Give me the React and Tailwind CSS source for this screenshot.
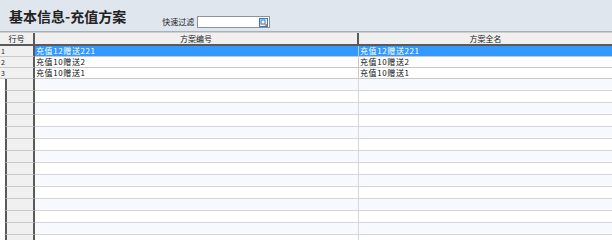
const rows = [
  { no: '1', code: '充值12赠送221', name: '充值12赠送221' },
  { no: '2', code: '充值10赠送2', name: '充值10赠送2' },
  { no: '3', code: '充值10赠送1', name: '充值10赠送1' },
];

const EMPTY_ROWS = 14;

function SearchIcon() {
  return (
    <svg width="9" height="9" viewBox="0 0 9 9">
      <rect x="0.5" y="0.5" width="8" height="8" fill="#e8f1fb" stroke="#3a78c2" />
      <rect x="2" y="2" width="4" height="4" fill="#ffffff" stroke="#3a78c2" />
      <rect x="6" y="6" width="2" height="2" fill="#e08a1e" />
    </svg>
  );
}

export default function App() {
  const font = { fontFamily: '"Noto Sans CJK SC", "Liberation Sans", sans-serif' };

  return (
    <div className="h-[240px] w-[612px] overflow-hidden bg-white" style={font}>
      <div className="flex h-[32px] items-start border-b border-[#a8b0b8] bg-[#dfe6ee]">
        <h1 className="ml-[9px] mt-[7px] text-[14px] font-semibold leading-[18px] text-[#222]">
          基本信息-充值方案
        </h1>
        <div className="ml-[36px] mt-[16px] flex items-center">
          <span className="text-[8px] leading-[10px] text-[#222]">快速过滤</span>
          <div className="ml-[3px] flex h-[12px] w-[73px] items-center justify-end border border-[#8a939c] bg-white pr-[1px]">
            <SearchIcon />
          </div>
        </div>
      </div>

      <div className="grid grid-cols-[35px_324px_1fr] border-t border-[#d0d0d0]">
        <div className="flex h-[13px] items-center justify-center border-b-2 border-r-2 border-[#5a5a5a] bg-[#f0f0f0] text-[8px] leading-none text-[#222]">
          行号
        </div>
        <div className="flex h-[13px] items-center justify-center border-b-2 border-r-2 border-[#5a5a5a] bg-[#f0f0f0] text-[8px] leading-none text-[#222]">
          方案编号
        </div>
        <div className="flex h-[13px] items-center justify-center border-b-2 border-[#5a5a5a] bg-[#f0f0f0] text-[8px] leading-none text-[#222]">
          方案全名
        </div>

        {rows.map((r, i) => {
          const sel = i === 0;
          const cell = sel
            ? 'bg-[#3399ff] text-white'
            : 'bg-white text-[#111]';
          return [
            <div
              key={`n${i}`}
              className="flex h-[11px] items-center border-b border-r-2 border-[#c8c8c8] border-r-[#5a5a5a] bg-[#f0f0f0] pl-[1px] text-[7px] leading-none text-[#222]"
            >
              {r.no}
            </div>,
            <div
              key={`c${i}`}
              className={`flex h-[11px] items-center border-b border-r border-[#c8c8c8] pl-[1px] text-[8px] leading-none tracking-[0.6px] ${cell}`}
            >
              {r.code}
            </div>,
            <div
              key={`f${i}`}
              className={`flex h-[11px] items-center border-b border-[#c8c8c8] pl-[1px] text-[8px] leading-none tracking-[0.6px] ${cell}`}
            >
              {r.name}
            </div>,
          ];
        })}

        {Array.from({ length: EMPTY_ROWS }).map((_, i) => {
          const bg = i % 2 === 0 ? 'bg-[#f8f8ff]' : 'bg-white';
          return [
            <div key={`en${i}`} className="flex h-[12px] bg-white">
              <div className="ml-[5px] h-full flex-1 border-b border-l-2 border-r-2 border-[#c8c8c8] border-l-[#5a5a5a] border-r-[#5a5a5a] bg-[#f0f0f0]" />
            </div>,
            <div key={`ec${i}`} className={`h-[12px] border-b border-r border-[#d8d8d8] ${bg}`} />,
            <div key={`ef${i}`} className={`h-[12px] border-b border-[#d8d8d8] ${bg}`} />,
          ];
        })}
      </div>
    </div>
  );
}
